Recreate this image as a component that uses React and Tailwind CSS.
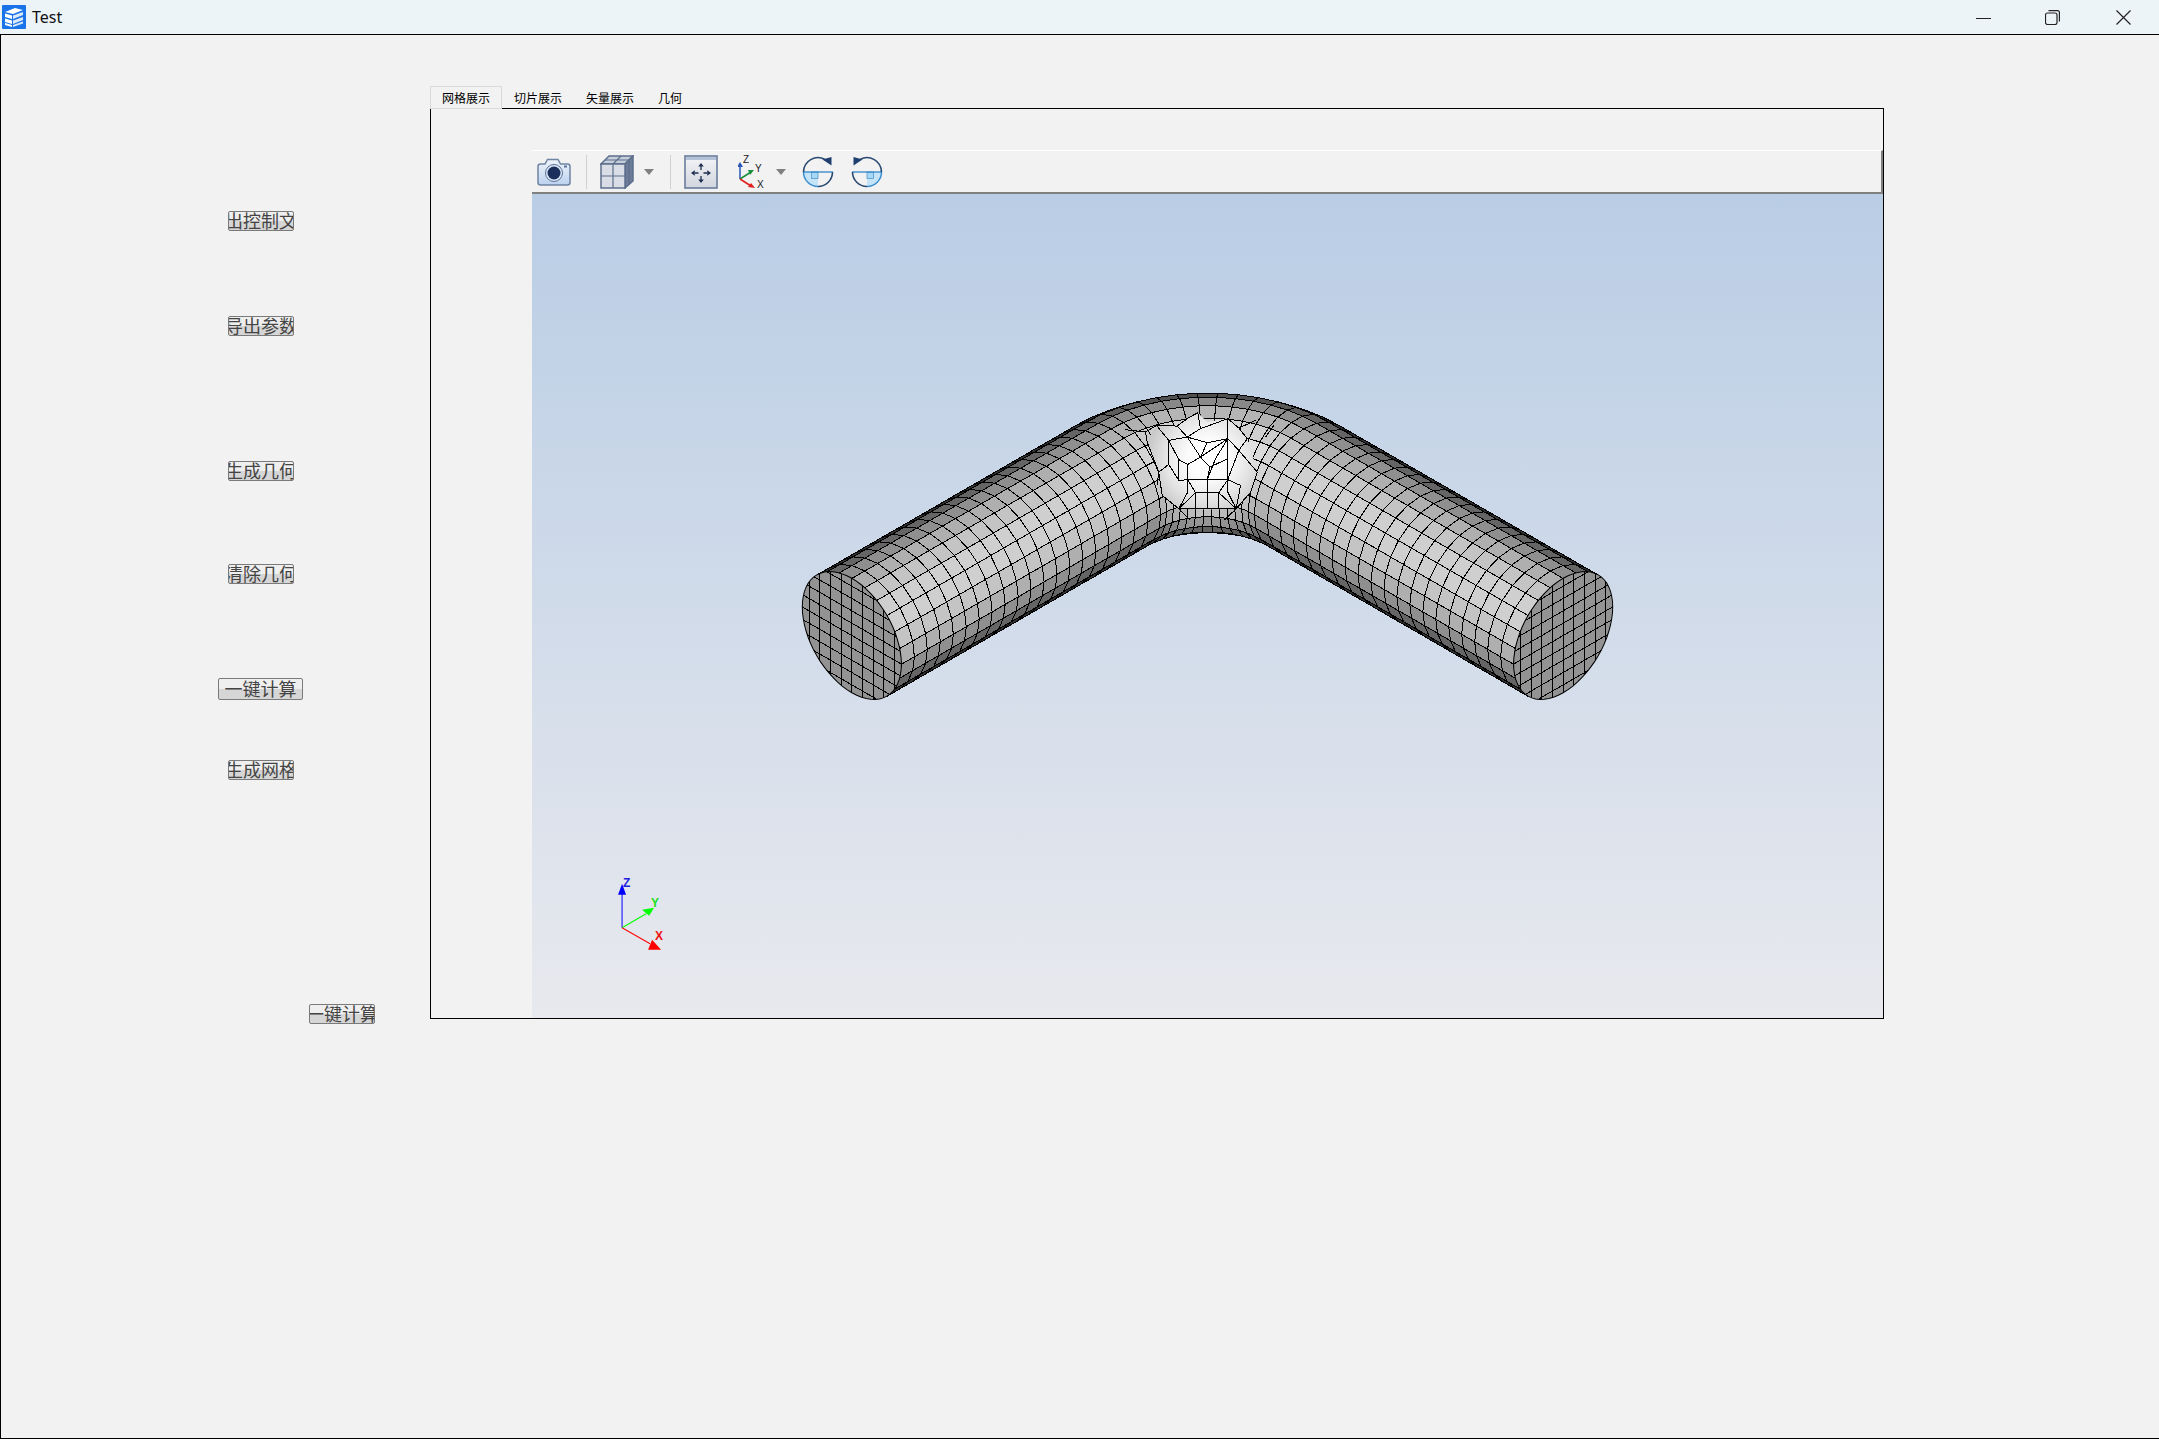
import { useId } from 'react';

// tube mesh, isometric camera, values measured from the screenshot (page px)
const R = 70;
const BEND = 136;
const LEG = 502.6;
const CELLS_AROUND = 24;
const CELLS_LEG = 20;
const CELLS_BEND = 13;
const VIEW = [1 / Math.sqrt(3), -1 / Math.sqrt(3), 1 / Math.sqrt(3)];

const project = ([x, y, z]) => [
  1207 + 0.7071 * (x + y),
  430 + 0.4082 * (x - y) - 0.8165 * z,
];

const dot = (a, b) => a[0] * b[0] + a[1] * b[1] + a[2] * b[2];
const pts = (list) => list.map((p) => `${p[0].toFixed(1)},${p[1].toFixed(1)}`).join(' ');

const buildStations = () => {
  const stations = [];
  const straight = LEG - BEND;
  for (let i = 0; i < CELLS_LEG; i++) {
    stations.push({ pos: [0, -LEG + (straight * i) / CELLS_LEG, 0], out: [-1, 0, 0] });
  }
  for (let i = 0; i <= CELLS_BEND; i++) {
    const a = ((Math.PI / 2) * i) / CELLS_BEND;
    const out = [-Math.cos(a), Math.sin(a), 0];
    stations.push({ pos: [BEND + BEND * out[0], -BEND + BEND * out[1], 0], out });
  }
  for (let i = 1; i <= CELLS_LEG; i++) {
    stations.push({ pos: [BEND + (straight * i) / CELLS_LEG, 0, 0], out: [0, 1, 0] });
  }
  return stations;
};

const ringPoint = (st, phi) => [
  st.pos[0] + R * Math.cos(phi) * st.out[0],
  st.pos[1] + R * Math.cos(phi) * st.out[1],
  R * Math.sin(phi),
];

const buildQuads = () => {
  const stations = buildStations();
  const quads = [];
  for (let i = 0; i < stations.length - 1; i++) {
    const a = stations[i];
    const b = stations[i + 1];
    for (let j = 0; j < CELLS_AROUND; j++) {
      const p0 = ((Math.PI * 2) * j) / CELLS_AROUND;
      const p1 = ((Math.PI * 2) * (j + 1)) / CELLS_AROUND;
      const pm = (p0 + p1) / 2;
      const ox = (a.out[0] + b.out[0]) / 2;
      const oy = (a.out[1] + b.out[1]) / 2;
      const len = Math.hypot(ox, oy);
      const n = [(Math.cos(pm) * ox) / len, (Math.cos(pm) * oy) / len, Math.sin(pm)];
      const lit = dot(n, VIEW);
      if (lit < -0.04) continue;
      const corners = [ringPoint(a, p0), ringPoint(b, p0), ringPoint(b, p1), ringPoint(a, p1)];
      const depth = corners.reduce((s, c) => s + dot(c, VIEW), 0) / 4;
      // lifted a little, the shadow side of the reference is not as dark as plain lambert
      const g = Math.round(255 * 0.95 * Math.pow(Math.max(0.12, lit), 0.75));
      quads.push({ points: pts(corners.map(project)), fill: `rgb(${g},${g},${g})`, depth });
    }
  }
  return quads.sort((a, b) => a.depth - b.depth);
};

const QUADS = buildQuads();

const zoomPt = ([x, y]) => [1090 + x / 3, 385 + y / 3];

// hand traced irregular cells on the outside of the bend
const PATCH = [
  [198, 120], [260, 122], [290, 100], [322, 82], [350, 110], [412, 100], [445, 128], [470, 160],
  [500, 260], [480, 320], [437, 370], [350, 372], [265, 370], [215, 330], [205, 260], [170, 170],
];

const PATCH_LINES = [
  [[105, 133], [165, 140], [198, 120], [260, 122], [290, 100], [322, 82], [330, 130], [290, 155], [260, 122]],
  [[165, 140], [170, 170], [205, 260], [200, 300]],
  [[198, 120], [235, 165], [235, 237], [205, 260]],
  [[235, 165], [290, 155], [350, 172], [412, 160], [412, 100], [330, 130]],
  [[290, 155], [330, 215]],
  [[292, 237], [292, 283], [350, 283], [412, 283], [412, 160]],
  [[350, 172], [330, 215], [292, 237], [265, 223], [235, 165]],
  [[412, 160], [330, 215], [358, 245], [350, 283]],
  [[412, 160], [375, 220], [350, 283]],
  [[358, 245], [412, 220]],
  [[265, 223], [265, 285], [292, 283]],
  [[235, 237], [265, 285]],
  [[292, 283], [315, 322], [385, 322], [412, 283]],
  [[350, 283], [350, 372]],
  [[315, 322], [315, 370]],
  [[385, 322], [385, 370]],
  [[265, 370], [292, 320], [292, 283]],
  [[265, 370], [315, 322]],
  [[437, 370], [385, 322]],
  [[437, 370], [412, 320], [412, 283]],
  [[265, 370], [437, 370]],
  [[412, 283], [450, 300], [437, 370]],
  [[412, 160], [445, 195], [412, 282]],
  [[445, 195], [500, 260], [480, 320], [437, 370]],
  [[412, 100], [445, 128], [470, 160], [445, 195]],
  [[445, 128], [495, 105]],
  [[525, 155], [550, 120]],
  [[205, 260], [215, 330], [265, 370]],
  [[265, 370], [300, 405]],
  [[437, 370], [400, 405]],
];

const capOutline = (cx, dirX) => {
  // circle in the plane of (dirX * x) and z, seen from the iso camera
  const outline = [];
  for (let i = 0; i < 64; i++) {
    const a = (i / 64) * Math.PI * 2;
    const u = R * Math.cos(a);
    const w = R * Math.sin(a);
    outline.push([cx + 0.7071 * u, 635 + dirX * 0.4082 * u - 0.8165 * w]);
  }
  return outline;
};

const Cap = ({ cx, dirX }) => {
  const id = useId();
  const step = 15.1;
  const lines = [];
  for (let i = -5; i <= 5; i++) {
    const u = i * step;
    lines.push([[cx + 0.7071 * u, 635 + dirX * 0.4082 * u - 90], [cx + 0.7071 * u, 635 + dirX * 0.4082 * u + 90]]);
    const w = i * step;
    lines.push([
      [cx - 70, 635 - dirX * 0.4082 * 99 - 0.8165 * w],
      [cx + 70, 635 + dirX * 0.4082 * 99 - 0.8165 * w],
    ]);
  }
  const outline = pts(capOutline(cx, dirX));
  return (
    <g>
      <clipPath id={id}>
        <polygon points={outline} />
      </clipPath>
      <polygon points={outline} fill="#939393" stroke="#000" strokeWidth="1" />
      <g clipPath={`url(#${id})`}>
        {lines.map((l, i) => (
          <line key={i} x1={l[0][0]} y1={l[0][1]} x2={l[1][0]} y2={l[1][1]} stroke="#000" strokeWidth="1" shapeRendering="crispEdges" />
        ))}
      </g>
    </g>
  );
};

const Triad = () => (
  <g fontFamily="'Liberation Sans', sans-serif" fontWeight="700" fontSize="12">
    <line x1="622" y1="927" x2="622" y2="890" stroke="#0000ff" strokeWidth="1" />
    <polygon points="622,883 626,894 618,894" fill="#0000ff" />
    <text x="623" y="886" fill="#2020e0">Z</text>
    <line x1="622" y1="927" x2="646" y2="913" stroke="#00ff00" strokeWidth="1" />
    <polygon points="654,907 649,915 642,909" fill="#00ff00" />
    <text x="651" y="906" fill="#20e020">Y</text>
    <line x1="622" y1="927" x2="650" y2="943" stroke="#ff0000" strokeWidth="1" />
    <polygon points="661,949 648,949 652,939" fill="#ff0000" />
    <text x="655" y="939" fill="#f01010">X</text>
  </g>
);

const Viewport = () => (
  <svg className="block w-full flex-1" viewBox="532 194 1350 823" width="1350" height="823">
    <defs>
      <radialGradient id="patchShade" gradientUnits="userSpaceOnUse" cx="1207" cy="458" r="60">
        <stop offset="0" stopColor="#ffffff" />
        <stop offset="0.35" stopColor="#fbfbfb" />
        <stop offset="0.7" stopColor="#e4e4e4" />
        <stop offset="1" stopColor="#c8c8c8" />
      </radialGradient>
    </defs>
    {QUADS.map((q, i) => (
      <polygon key={i} points={q.points} fill={q.fill} stroke="#000" strokeWidth="1" shapeRendering="crispEdges" />
    ))}
    <polygon points={pts(PATCH.map(zoomPt))} fill="url(#patchShade)" />
    {PATCH_LINES.map((l, i) => (
      <polyline key={i} points={pts(l.map(zoomPt))} fill="none" stroke="#000" strokeWidth="1" shapeRendering="crispEdges" />
    ))}
    <Cap cx={851.6} dirX={1} />
    <Cap cx={1562.4} dirX={-1} />
    <Triad />
  </svg>
);

const CameraIcon = () => (
  <svg width="34" height="28" viewBox="0 0 34 28" className="shrink-0">
    <defs>
      <linearGradient id="camBody" x1="0" y1="0" x2="0" y2="1">
        <stop offset="0" stopColor="#eef4fb" />
        <stop offset="1" stopColor="#bcd2ef" />
      </linearGradient>
    </defs>
    <path d="M1 8.5Q1 6 3.5 6H8L10.5 1.5H21L23.5 6H30.5Q33 6 33 8.5V24.5Q33 27 30.5 27H3.5Q1 27 1 24.5Z" fill="url(#camBody)" stroke="#6f84a3" strokeWidth="1.5" />
    <circle cx="17" cy="15" r="8.5" fill="#dce8f7" stroke="#5d7398" strokeWidth="1" />
    <circle cx="17" cy="15" r="6.5" fill="#1b2e5c" />
    <rect x="27" y="7.5" width="3" height="2" fill="#5d7398" />
  </svg>
);

const CubeIcon = () => (
  <svg width="34" height="34" viewBox="0 0 34 34" className="shrink-0">
    <polygon points="1,9 9,1 33,1 25,9" fill="#c7cedb" stroke="#5d6f8c" strokeWidth="1.5" />
    <polygon points="25,9 33,1 33,26 25,33" fill="#6d7d98" stroke="#5d6f8c" strokeWidth="1.5" />
    <rect x="1" y="9" width="24" height="24" fill="#d9dde5" stroke="#5d6f8c" strokeWidth="1.5" />
    <path d="M13 9V33M1 21H25M5 5H29M21 1L13 9M29 5V30" fill="none" stroke="#5d6f8c" strokeWidth="1.2" />
  </svg>
);

const FitIcon = () => (
  <svg width="34" height="34" viewBox="0 0 34 34" className="shrink-0">
    <defs>
      <linearGradient id="fitBody" x1="0" y1="0" x2="0" y2="1">
        <stop offset="0" stopColor="#f4f5f8" />
        <stop offset="1" stopColor="#d2d5de" />
      </linearGradient>
    </defs>
    <rect x="1" y="1" width="32" height="32" fill="url(#fitBody)" stroke="#6a7c9b" strokeWidth="1.6" />
    <rect x="2" y="2" width="30" height="3" fill="#b4c2d8" />
    <path d="M17 11V15M17 21V25M11 18H14.5M19.5 18H23" stroke="#1f2f50" strokeWidth="1.3" />
    <path d="M17 8L19.8 11.5H14.2ZM17 28L19.8 24.5H14.2ZM7 18L10.8 15.2V20.8ZM27 18L23.2 15.2V20.8Z" fill="#1f2f50" />
  </svg>
);

const AxesIcon = () => (
  <svg width="30" height="34" viewBox="0 0 30 34" className="shrink-0">
    <path d="M2 24V10" stroke="#2a55b8" strokeWidth="1.5" />
    <polygon points="2,7 5,12 -1,12" fill="#2a55b8" />
    <path d="M2 24L13 17" stroke="#1c8f3c" strokeWidth="1.5" />
    <polygon points="16,15 12,20 10,15" fill="#1c8f3c" />
    <path d="M2 24L13 31" stroke="#e02020" strokeWidth="1.5" />
    <polygon points="17,33 10,32 13,28" fill="#e02020" />
    <g fontFamily="'Liberation Sans', sans-serif" fontSize="10" fill="#222">
      <text x="5" y="8">Z</text>
      <text x="17" y="17">Y</text>
      <text x="19" y="33">X</text>
    </g>
  </svg>
);

const RotateIcon = ({ flip }) => (
  <svg width="32" height="32" viewBox="0 0 32 32" className={flip ? 'shrink-0 -scale-x-100' : 'shrink-0'}>
    <path d="M1.5 16A14.5 14.5 0 0 0 16 30.5V16Z" fill="#c6e4f8" />
    <rect x="9.5" y="16" width="6.5" height="6.5" fill="#a9d6f3" stroke="#4f9ad2" strokeWidth="0.8" />
    <path d="M1.5 16A14.5 14.5 0 0 0 16 30.5" fill="none" stroke="#3b8fd0" strokeWidth="1.5" />
    <path d="M1 16H31" stroke="#2f86c8" strokeWidth="1.3" />
    <path d="M1.5 16A14.5 14.5 0 0 1 23 3.5" fill="none" stroke="#2a4a72" strokeWidth="1.6" />
    <path d="M16 30.5A14.5 14.5 0 0 0 30.5 16" fill="none" stroke="#2a4a72" strokeWidth="1.6" />
    <polygon points="29.5,9.5 20.5,3.5 29.5,1" fill="#1f3f70" />
  </svg>
);

const Caret = () => (
  <svg width="10" height="6" viewBox="0 0 10 6" className="shrink-0">
    <polygon points="0,0 10,0 5,6" fill="#808080" />
  </svg>
);

const Toolbar = () => (
  <div className="flex h-[44px] shrink-0 items-center border-t border-r-2 border-b-2 border-t-white border-r-[#808080] border-b-[#808080] bg-[#f2f2f2]">
    <div className="ml-[5px]"><CameraIcon /></div>
    <div className="ml-[15px] h-[34px] w-px bg-[#d0d0d0]" />
    <div className="ml-[13px]"><CubeIcon /></div>
    <div className="ml-[10px]"><Caret /></div>
    <div className="ml-[16px] h-[34px] w-px bg-[#d0d0d0]" />
    <div className="ml-[13px]"><FitIcon /></div>
    <div className="ml-[20px]"><AxesIcon /></div>
    <div className="ml-[8px]"><Caret /></div>
    <div className="ml-[16px]"><RotateIcon /></div>
    <div className="ml-[17px]"><RotateIcon flip /></div>
  </div>
);

const SideButton = ({ label, className }) => (
  <button
    type="button"
    className={`flex shrink-0 items-center justify-center overflow-hidden rounded-[2px] border border-[#7a7a7a] bg-linear-to-b from-[#efefef] from-50% to-[#d6d6d6] to-50% pb-[2px] text-[18px] leading-none whitespace-nowrap text-[#444] ${className}`}
  >
    <span className="shrink-0">{label}</span>
  </button>
);

const Tab = ({ label, active }) => (
  <button
    type="button"
    className={`h-[23px] border px-[11px] text-[12px] leading-none text-black ${
      active ? 'border-[#d9d9d9] bg-[#f2f2f2]' : 'border-transparent'
    }`}
  >
    {label}
  </button>
);

const AppIcon = () => (
  <svg width="24" height="24" viewBox="0 0 24 24" className="shrink-0">
    <rect width="24" height="24" rx="1" fill="#1a73e8" />
    <path d="M3 7L13 3L21 5L11 9Z" fill="#fff" />
    <path d="M3 8.5L10 10.5V14L3 12Z" fill="#fff" />
    <path d="M11 10.5L21 7V10L11 14Z" fill="#dbe9fb" />
    <path d="M3 13.5L10 15.5V19L3 17Z" fill="#fff" />
    <path d="M11 15.5L21 12V15L11 19Z" fill="#dbe9fb" />
    <path d="M3 18L10 20V22L3 20Z" fill="#fff" />
    <path d="M11 20L21 16.5V18.5L11 22Z" fill="#dbe9fb" />
  </svg>
);

const WindowButtons = () => (
  <div className="flex items-center">
    <svg width="15" height="15" viewBox="0 0 15 15" className="mr-[54px]">
      <path d="M0 8.5H15" stroke="#222" strokeWidth="1" />
    </svg>
    <svg width="15" height="15" viewBox="0 0 15 15" className="mr-[56px]">
      <rect x="0.5" y="3" width="11.5" height="11.5" rx="2" fill="none" stroke="#222" strokeWidth="1.2" />
      <path d="M3.5 0.7H12.5Q14.4 0.7 14.4 2.6V11.5" fill="none" stroke="#222" strokeWidth="1.2" />
    </svg>
    <svg width="15" height="15" viewBox="0 0 15 15" className="mr-[28px]">
      <path d="M0.5 0.5L14.5 14.5M14.5 0.5L0.5 14.5" stroke="#222" strokeWidth="1.2" />
    </svg>
  </div>
);

export default function App() {
  return (
    <div className="flex h-[1439px] w-[2159px] flex-col overflow-hidden bg-[#f2f2f2] font-['Noto_Sans_CJK_SC','Noto_Sans',sans-serif]">
      <div className="flex h-[35px] shrink-0 items-center justify-between border-b border-black bg-[#edf4f8]">
        <div className="flex items-center pl-[2px]">
          <AppIcon />
          <span className="ml-[6px] font-['Noto_Sans',sans-serif] text-[16px] text-[#111]">Test</span>
        </div>
        <WindowButtons />
      </div>

      <div className="flex min-h-0 flex-1 border-b border-l border-black">
        <div className="flex w-[429px] shrink-0 flex-col items-start">
          <SideButton label="输出控制文件" className="mt-[176px] ml-[227px] h-[20px] w-[66px]" />
          <SideButton label="导出参数" className="mt-[85px] ml-[227px] h-[20px] w-[66px]" />
          <SideButton label="生成几何" className="mt-[125px] ml-[227px] h-[20px] w-[66px]" />
          <SideButton label="清除几何" className="mt-[83px] ml-[227px] h-[20px] w-[66px]" />
          <SideButton label="一键计算" className="mt-[94px] ml-[217px] h-[22px] w-[85px]" />
          <SideButton label="生成网格" className="mt-[60px] ml-[227px] h-[20px] w-[66px]" />
          <SideButton label="一键计算" className="mt-[224px] ml-[308px] h-[20px] w-[66px]" />
        </div>

        <div className="flex w-[1454px] shrink-0 flex-col pt-[51px]">
          <div className="relative z-10 -mb-px flex">
            <Tab label="网格展示" active />
            <Tab label="切片展示" />
            <Tab label="矢量展示" />
            <Tab label="几何" />
          </div>
          <div className="flex h-[911px] flex-col border border-black pt-[41px] pl-[101px]">
            <Toolbar />
            <div className="flex min-h-0 flex-1 flex-col bg-linear-to-b from-[#b9cde5] to-[#e8e9ee]">
              <Viewport />
            </div>
          </div>
        </div>
      </div>
    </div>
  );
}
